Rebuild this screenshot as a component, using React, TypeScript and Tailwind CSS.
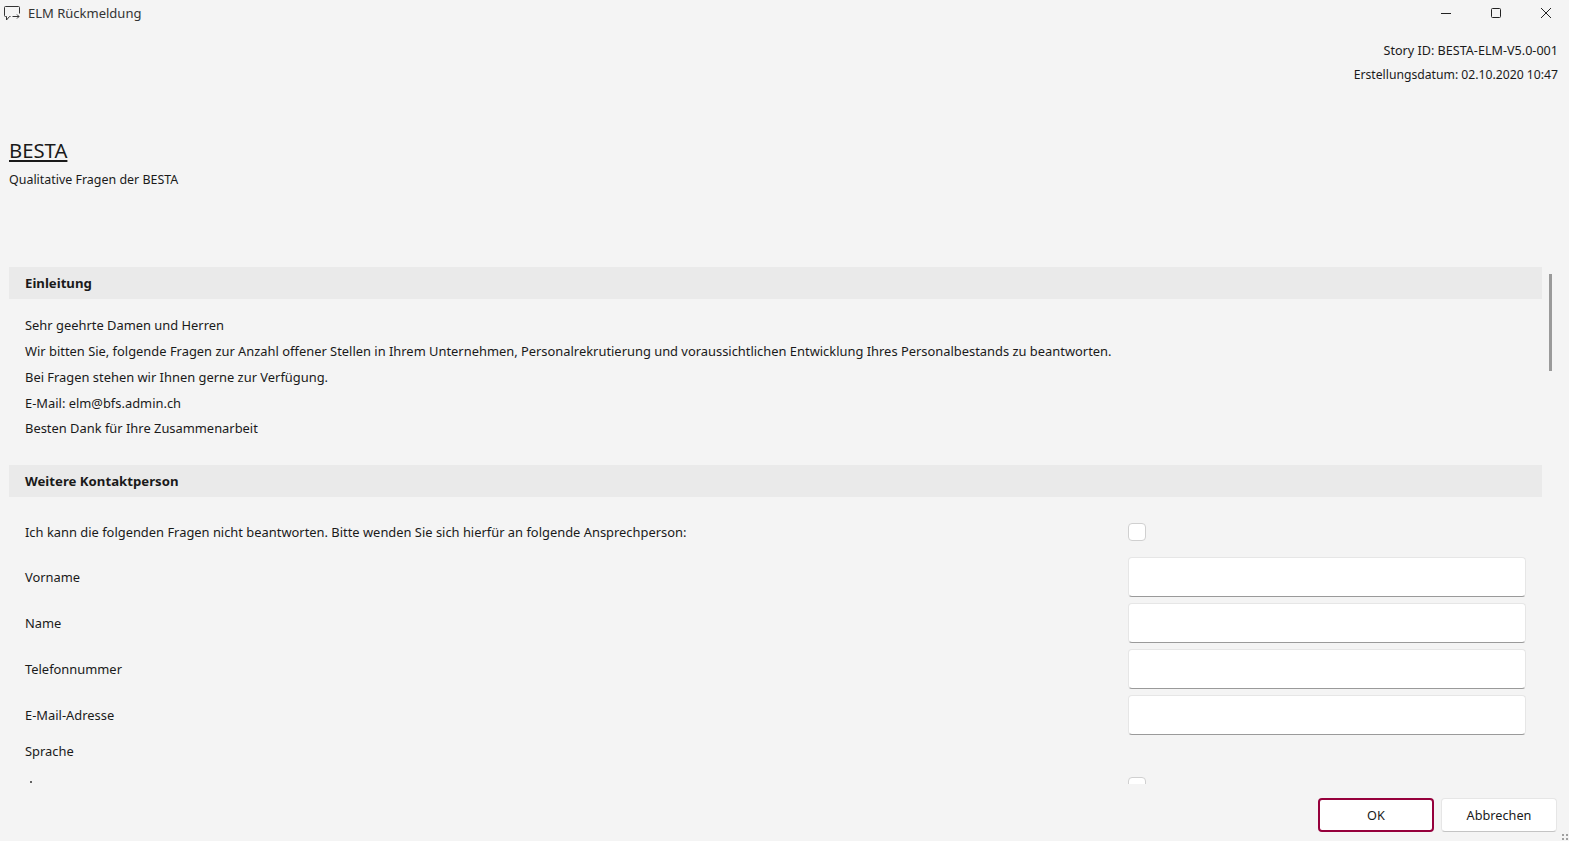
import React from 'react';

const font = "font-['Noto_Sans','Open_Sans',sans-serif]";

const SectionHeader = ({ title }: { title: string }) => (
  <div className="h-8 bg-[#eaeaea] pl-4 pt-[2px] flex items-center text-[13.2px] font-bold text-[#1a1a1a]">{title}</div>
);

const TextInput = () => (
  <div className="w-[398px] h-[40px] bg-white border border-[#e6e6e6] border-b-[#9a9a9a] rounded-[4px]" />
);

const Checkbox = () => (
  <div className="w-[18px] h-[18px] bg-white border border-[#d0d0d0] rounded-[4px]" />
);

const FieldRow = ({ label }: { label: string }) => (
  <div className="h-[40px] pl-4 pr-4 flex items-center justify-between">
    <span className="pt-[1px]">{label}</span>
    <TextInput />
  </div>
);

const introLines = [
  'Sehr geehrte Damen und Herren',
  'Wir bitten Sie, folgende Fragen zur Anzahl offener Stellen in Ihrem Unternehmen, Personalrekrutierung und voraussichtlichen Entwicklung Ihres Personalbestands zu beantworten.',
  'Bei Fragen stehen wir Ihnen gerne zur Verfügung.',
  'E-Mail: elm@bfs.admin.ch',
  'Besten Dank für Ihre Zusammenarbeit',
];

export default function App() {
  return (
    <div className={`${font} relative w-[1569px] h-[841px] overflow-hidden bg-[#f4f4f4] text-[12.9px] text-[#1a1a1a] flex flex-col`}>
      {/* title bar */}
      <div className="h-[28px] shrink-0 flex items-center justify-between">
        <div className="flex items-center pl-[4px] gap-[8px]">
          <svg width="16" height="16" viewBox="0 0 16 16" fill="none" stroke="#333" strokeWidth="1">
            <path d="M15.5 7.5V1.5a1 1 0 0 0-1-1h-13a1 1 0 0 0-1 1v8a1 1 0 0 0 1 1h1v3.5l3-3.5h1" />
            <path d="M8.5 10.5h6.5M13 8.5l2 2-2 2" />
          </svg>
          <span className="text-[13px] text-[#333]">ELM Rückmeldung</span>
        </div>
        <div className="flex items-center gap-[4px] pb-[2px]">
          <div className="w-[46px] h-[26px] flex items-center justify-center">
            <svg width="10" height="10" viewBox="0 0 10 10" stroke="#222" fill="none"><path d="M0 5.5h10" /></svg>
          </div>
          <div className="w-[46px] h-[26px] flex items-center justify-center">
            <svg width="10" height="10" viewBox="0 0 10 10" stroke="#222" fill="none"><rect x="0.5" y="0.5" width="9" height="9" rx="1" /></svg>
          </div>
          <div className="w-[46px] h-[26px] flex items-center justify-center">
            <svg width="10" height="10" viewBox="0 0 10 10" stroke="#222" fill="none"><path d="M0 0l10 10M10 0L0 10" /></svg>
          </div>
        </div>
      </div>

      {/* story meta */}
      <div className="pr-[11px] text-right leading-[24px] pt-[11px]">
        <div className="text-[12.6px]">Story ID: BESTA-ELM-V5.0-001</div>
        <div className="text-[12.2px]">Erstellungsdatum: 02.10.2020 10:47</div>
      </div>

      <div className="pl-[9px] mt-[49px]">
        <div className="text-[20.3px] leading-[28px] underline underline-offset-2">BESTA</div>
        <div className="mt-[7px] text-[12.45px] leading-[18px]">Qualitative Fragen der BESTA</div>
      </div>

      {/* scrolling form */}
      <div className="mt-[78px] flex-1 min-h-0 flex">
        <div className="w-[1533px] ml-[9px] overflow-hidden">
          <SectionHeader title="Einleitung" />
          <div className="pl-4 pt-[14.3px] leading-[25.75px]">
            {introLines.map((line) => (
              <div key={line}>{line}</div>
            ))}
          </div>
          <div className="mt-[22.7px]">
            <SectionHeader title="Weitere Kontaktperson" />
          </div>
          <div className="pl-4 pr-4 h-[71px] flex items-center justify-between">
            <span>Ich kann die folgenden Fragen nicht beantworten. Bitte wenden Sie sich hierfür an folgende Ansprechperson:</span>
            <div className="w-[398px]"><Checkbox /></div>
          </div>
          <div className="flex flex-col gap-[6px] -mt-[11px]">
            <FieldRow label="Vorname" />
            <FieldRow label="Name" />
            <FieldRow label="Telefonnummer" />
            <FieldRow label="E-Mail-Adresse" />
          </div>
          <div className="pl-4 mt-[6px] leading-[20px]">Sprache</div>
          <div className="pl-4 pr-4 mt-[16px] flex justify-between">
            <div className="pl-[5px] pt-[4px]"><div className="w-[2px] h-[2px] rounded-full bg-[#333]" /></div>
            <div className="w-[398px]"><Checkbox /></div>
          </div>
        </div>
        <div className="ml-[7px] pt-[7px]">
          <div className="w-[3px] h-[97px] bg-[#9a9a9a]" />
        </div>
      </div>

      {/* footer */}
      <div className="h-[57px] shrink-0 flex justify-end gap-[7px] pt-[14px] pr-[12px]">
        <button className="w-[116px] h-[34px] pt-[1px] bg-white border-2 border-[#96003c] rounded-[4px] text-[12.7px]">OK</button>
        <button className="w-[116px] h-[34px] pt-[1px] bg-white border border-[#e6e6e6] border-b-[#c4c4c4] rounded-[4px] text-[12.7px]">Abbrechen</button>
      </div>

      {/* resize grip */}
      <svg className="absolute right-0 bottom-0" width="7" height="7" viewBox="0 0 7 7" fill="#a0a0a0">
        <rect x="0" y="0" width="2" height="2" />
        <rect x="4" y="0" width="2" height="2" />
        <rect x="0" y="4" width="2" height="2" />
        <rect x="4" y="4" width="2" height="2" />
      </svg>
    </div>
  );
}
